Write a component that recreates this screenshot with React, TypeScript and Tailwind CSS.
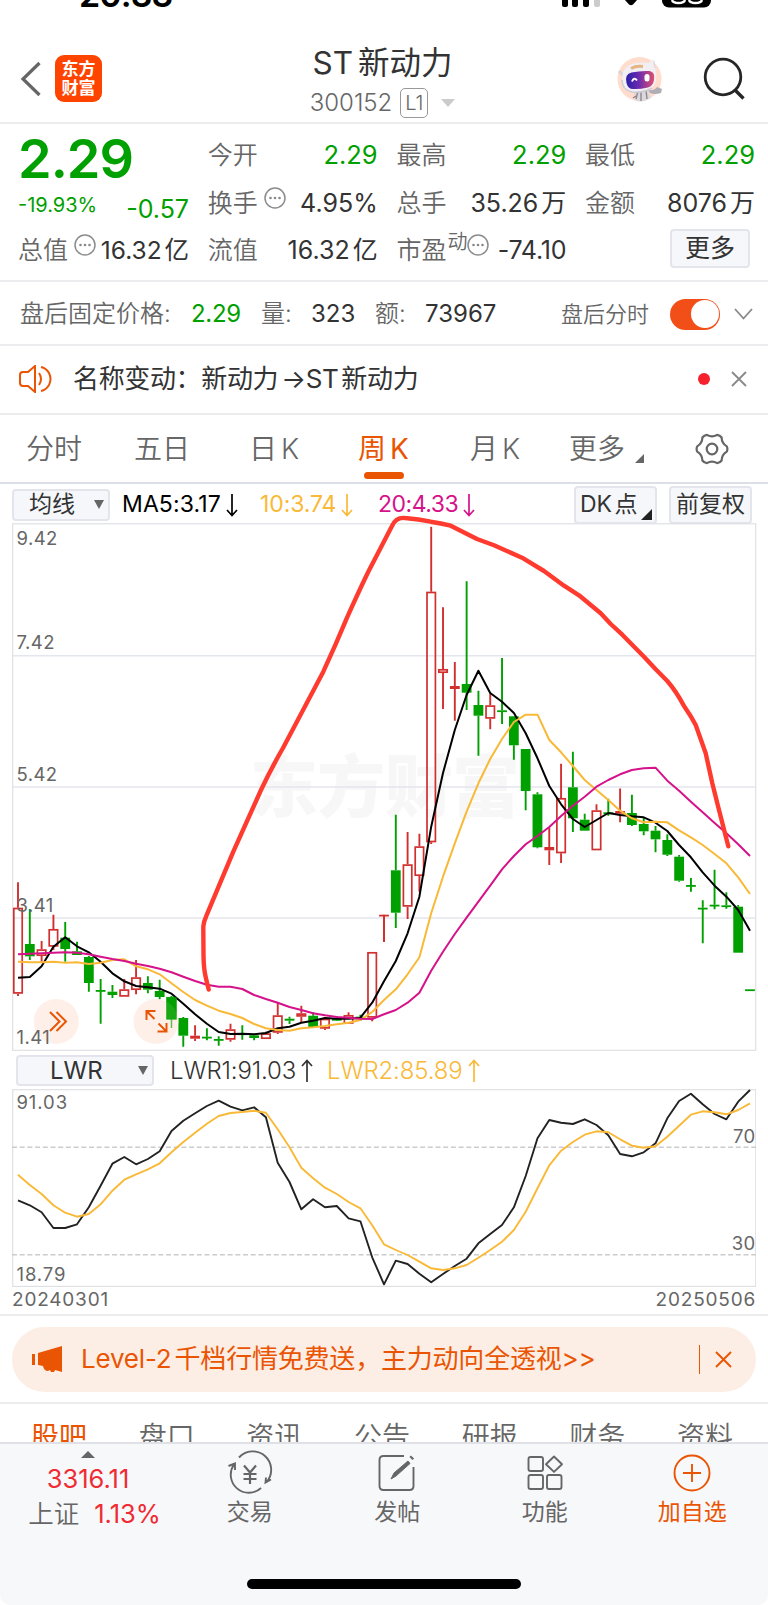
import type { ReactNode } from "react"

const font = "font-['Inter','Noto_Sans_CJK_SC',sans-serif]"

// [type, high, bodyTop, bodyBottom, low]: u = hollow rise, f = filled rise, d = fall
type Candle = ["u" | "f" | "d", number, number, number, number]

const candles: Candle[] = [
  ["u", 882.3, 907.7, 993.7, 996],
  ["d", 909, 944, 956.3, 960],
  ["u", 941, 949.3, 956, 961.7],
  ["u", 914.7, 929, 946.7, 950],
  ["d", 922, 937.7, 949, 961.7],
  ["d", 941.7, 951.3, 955, 955],
  ["d", 956, 957, 983, 991.7],
  ["d", 979, 990, 991.3, 1023.7],
  ["d", 985, 991.7, 995, 998],
  ["u", 979, 989.3, 996.7, 996.7],
  ["u", 960, 977.3, 990, 994.3],
  ["d", 976.3, 983, 989.7, 993.3],
  ["d", 979.7, 991, 997, 999.3],
  ["d", 996, 997.3, 1019.3, 1028],
  ["d", 1017, 1018, 1035.7, 1046.7],
  ["f", 1025.3, 1035.7, 1038.7, 1041],
  ["d", 1028.3, 1036.7, 1038, 1040.3],
  ["d", 1036.3, 1039, 1040.3, 1045.7],
  ["u", 1023.7, 1029.3, 1039.7, 1041.7],
  ["d", 1025.3, 1033.3, 1034.7, 1039.7],
  ["d", 1034, 1035.3, 1038, 1040.3],
  ["u", 1031.7, 1033.3, 1039, 1039],
  ["u", 1002.7, 1015.3, 1032.7, 1034],
  ["d", 1016.7, 1018.7, 1020.7, 1024],
  ["u", 1005.7, 1013.3, 1016.7, 1022],
  ["d", 1012.3, 1015.7, 1027, 1027.7],
  ["u", 1017, 1018.7, 1028.7, 1030],
  ["d", 1016, 1018.7, 1020.7, 1021],
  ["u", 1012.3, 1015, 1023.7, 1023.7],
  ["d", 1014.7, 1016.7, 1019.3, 1021],
  ["u", 952, 952, 1017.7, 1021.3],
  ["f", 915, 914.7, 916, 942],
  ["d", 814.7, 870.3, 912.7, 928],
  ["u", 832, 864.3, 906.7, 919],
  ["u", 833.7, 846.3, 876, 891.7],
  ["u", 526.7, 591.7, 842.3, 844],
  ["u", 607.3, 669, 673, 709],
  ["f", 662, 686, 689, 720.7],
  ["d", 581.3, 684, 692.7, 710],
  ["d", 690.7, 705, 715.7, 755.7],
  ["u", 693.3, 705.3, 718.7, 729.3],
  ["d", 658, 710.3, 711.7, 724],
  ["d", 716, 716.3, 745.3, 759.7],
  ["d", 749, 749, 791, 810.3],
  ["d", 792.3, 794.3, 847.3, 848.3],
  ["f", 827.7, 847, 850.3, 865],
  ["u", 763.7, 798, 853.3, 863],
  ["d", 751.7, 787.3, 818.3, 832],
  ["d", 813.7, 819.7, 830.7, 830.7],
  ["u", 804.3, 810.3, 850.3, 850.3],
  ["d", 798.7, 812.3, 813.7, 815.7],
  ["f", 788.5, 811, 813.7, 822.3],
  ["d", 794.7, 813, 825, 826],
  ["d", 817.7, 824, 831.3, 835.3],
  ["d", 826, 830.7, 839.3, 852.3],
  ["d", 834.3, 840, 854.7, 856],
  ["d", 855, 856.7, 880.7, 881.7],
  ["d", 878, 885, 886.3, 891.7],
  ["d", 900.3, 907.7, 909, 943.3],
  ["d", 869.7, 904.7, 906, 909.3],
  ["d", 892.3, 905.3, 906.7, 908.7],
  ["d", 905, 906.7, 952.7, 952.7],
  ["d", 989.3, 989.3, 990.7, 990.7],
]

const ma5 = [
  977.7, 977, 966.3, 946.7, 937.3, 946.3, 952.3, 961.7, 973.3, 981.3, 986, 987.3, 988.7, 993.7, 1003.7, 1014.3,
  1023.7, 1032, 1034, 1033.7, 1034.3, 1033, 1028.3, 1026.7, 1022.7, 1020.7, 1018, 1018.7, 1018.7, 1017.7, 1002.7,
  981.3, 961, 933.3, 896.7, 826.7, 773, 730, 695, 670.7, 693, 701.7, 713, 733.3, 758.3, 786, 804.3, 819, 827, 820,
  813, 815, 816.3, 817.3, 822.7, 831, 845, 857.3, 872.3, 885.7, 896.7, 910, 930.7,
]

const ma10 = [
  961.7, 962.3, 962.3, 961.7, 962.7, 962.3, 964, 962.7, 960, 959.3, 966.3, 969.3, 974.3, 983.3, 992, 1000, 1005.7,
  1010.7, 1014, 1018, 1024, 1028.3, 1030, 1030.7, 1028.3, 1027.3, 1026, 1024.3, 1022.7, 1020, 1012, 1000, 989.3,
  974.3, 957.3, 913.3, 876.7, 843.3, 811.7, 783.3, 759, 739, 722, 714.7, 714.7, 740, 752.3, 766, 780, 790, 800,
  810.7, 818.3, 822.3, 821.7, 822.3, 830.3, 837.3, 845, 854, 863.3, 877.3, 894,
]

const ma20 = [
  954.3, 953.7, 953.3, 952.7, 952.3, 952.7, 954.3, 956.7, 959, 961, 963.7, 966, 968.7, 972.3, 976.7, 981, 984.7,
  986.7, 986.7, 989, 995, 999, 1002.7, 1007, 1010, 1013.3, 1015.3, 1017, 1017.7, 1018.7, 1019, 1014.3, 1010, 1002.7,
  992.7, 970.7, 951.7, 934, 917.7, 901.7, 885.7, 869.3, 856, 844.3, 836, 827, 816, 805.7, 796.7, 786.7, 780, 774.3,
  770, 768.3, 767.7, 780.7, 790.7, 801.7, 812.3, 823, 833.3, 844.3, 856,
]

const lwr1 = [
  451, 466, 487, 534, 534, 523, 472, 407, 341, 321, 343, 327, 304, 243, 212, 190, 168, 152, 170, 181, 172, 202, 338,
  396, 478, 448, 472, 468, 505, 514, 622, 703, 632, 642, 671, 697, 672, 648, 626, 580, 552, 525, 472, 378, 265, 210,
  218, 222, 208, 225, 256, 312, 319, 307, 280, 205, 153, 131, 163, 192, 208, 155, 120,
]

const lwr2 = [
  374, 405, 432, 466, 488, 500, 492, 463, 422, 389, 373, 358, 340, 307, 276, 248, 221, 198, 189, 186, 182, 188, 238,
  292, 353, 385, 413, 432, 456, 475, 526, 583, 600, 615, 635, 655, 660, 655, 645, 623, 600, 575, 540, 485, 415, 346,
  302, 276, 254, 244, 247, 268, 287, 293, 289, 260, 227, 194, 184, 187, 193, 180, 160,
]

const x = (i: number) => 18 + i * 11.806
const line = (ys: number[]) => ys.map((y, i) => `${x(i).toFixed(1)},${y}`).join(" ")
const lwrLine = (ys: number[]) => ys.map((y, i) => `${x(i).toFixed(1)},${(1050 + y / 3).toFixed(1)}`).join(" ")

const periods = [
  { label: "分时", width: "w-[108px]" },
  { label: "五日", width: "w-[115px]" },
  { label: "日 K", width: "w-[109px]" },
  { label: "周 K", width: "w-[112px]", active: true },
  { label: "月 K", width: "w-[99px]" },
]

const sections = ["股吧", "盘口", "资讯", "公告", "研报", "财务", "资料"]

export default function App() {
  return (
    <div
      className={`flex h-[1605px] w-[768px] flex-col overflow-hidden bg-white leading-none text-[#333] [word-spacing:-4px] ${font}`}
    >
      <StatusBar />
      <Header />
      <QuotePanel />
      <AfterHours />
      <Notice />
      <PeriodTabs />
      <PriceChart />
      <LwrChart />
      <Banner />
      <div className="flex h-[38px] shrink-0 justify-between overflow-hidden pl-[31px] pr-[35px] pt-[19px] text-[28px] text-[#666]">
        {sections.map((s, i) => (
          <span key={s} className={i === 0 ? "text-[#ea5504]" : "font-[350]"}>
            {s}
          </span>
        ))}
      </div>
      <BottomBar />
    </div>
  )
}

function StatusBar() {
  return (
    <div className="flex h-[30px] shrink-0 items-start overflow-hidden">
      <div className="-mt-[22px] ml-[79px] w-[440px] text-[34px] font-semibold tracking-[-0.9px] text-black">20:33</div>
      <svg className="ml-[41px]" width="152" height="12" viewBox="560 0 152 12">
        <rect x="562" y="-8" width="6" height="15" rx="2" />
        <rect x="572" y="-8" width="6" height="15" rx="2" />
        <rect x="583" y="-8" width="6" height="15" rx="2" />
        <rect x="594" y="-8" width="6" height="15" rx="2" fill="#ccc" />
        <path d="M625 0h12l-4 4.500q-2 1.500-4 0z" />
        <rect x="662" y="-16" width="49" height="23.500" rx="7" />
        <path d="M672 0q1 3 6.500 3t6.500-3M689 0q1 3 6.500 3t6.500-3" fill="none" stroke="#fff" strokeWidth="2.400" />
      </svg>
    </div>
  )
}

function Header() {
  return (
    <header className="flex h-[94px] shrink-0 items-center border-b-2 border-[#ececee] pl-[20px] pt-[5px]">
      <svg width="22" height="36" viewBox="0 0 22 36" fill="none" stroke="#666" strokeWidth="3.200">
        <path d="M19.500 2 3 18l16.500 16" />
      </svg>
      <div className="ml-[13px] flex h-[47px] w-[47px] flex-col items-center justify-center gap-[1px] rounded-[9px] bg-[#ff4400] text-[17px] font-bold leading-[18px] text-white">
        <span>东方</span>
        <span>财富</span>
      </div>
      <div className="ml-[207px] flex w-[147px] flex-col items-center pt-[8px]">
        <div className="whitespace-nowrap text-[31.500px] text-[#333]">ST 新动力</div>
        <div className="mt-[10px] flex items-center text-[#666]">
          <span className="text-[24px] font-light">300152</span>
          <span className="ml-[8px] flex h-[30px] w-[28px] items-center justify-center rounded-[5px] border-[1.500px] border-[#999] text-[20px] font-light">
            L1
          </span>
          <svg className="ml-[13px]" width="14" height="8">
            <path d="M0 0h14L7 8z" fill="#ccc" />
          </svg>
        </div>
      </div>
      <Robot />
      <svg className="ml-[40px]" width="44" height="44" viewBox="0 0 44 44" fill="none" stroke="#262626" strokeWidth="2.800">
        <circle cx="20" cy="20" r="17.800" />
        <path d="m32 33 8.500 8.500" strokeWidth="3.400" />
      </svg>
    </header>
  )
}

function Robot() {
  return (
    <svg className="ml-[161px]" width="46" height="46" viewBox="0 0 46 46">
      <defs>
        <linearGradient id="visor">
          <stop offset="0" stopColor="#2a1fa8" />
          <stop offset=".45" stopColor="#6a2bb0" />
          <stop offset="1" stopColor="#e0506e" />
        </linearGradient>
      </defs>
      <circle cx="22.500" cy="23" r="22" fill="#ffdccb" />
      <path d="M17 34h14l3 8q-10 6-16 2z" fill="#dcd8db" />
      <path d="M19 43l2-8M29 34l1 9M24 36v9M16 42l3-2" stroke="#8f8790" strokeWidth="1.400" />
      <path d="M31 34q6 1 9-3l5 2-1 4q-6 2-11 0z" fill="#b0adb5" />
      <path d="M2 15l5 5M36 5l1 8" stroke="#d8d4d8" strokeWidth="3" />
      <path d="M5 24Q5 9 19 7q7-1 13 0l4-4 1 7q3 5 2 13 0 7-5 9-9 5-19 4-10-1-10-12z" fill="#f1eff3" />
      <path d="M5 24q0 10 10 12 12 1 20-4" fill="none" stroke="#cfcbd2" strokeWidth="1.500" />
      <path d="M14 12.500q5-3 12-2" stroke="#e5b480" strokeWidth="2.800" fill="none" />
      <path d="M9.500 27q-2-9 5-10.500 9-2 18-1.500 6 1 4.500 9-1 6-6 7.500-9 2-15 1.500-5 0-6.500-6z" fill="url(#visor)" />
      <path d="M15 25.500q2-5 5-1" stroke="#fff" strokeWidth="2" fill="none" />
      <rect x="27.500" y="18" width="5" height="7.500" rx="2.500" fill="#fff" />
    </svg>
  )
}

function Dots() {
  return (
    <svg width="22" height="22" viewBox="0 0 22 22" className="shrink-0">
      <circle cx="11" cy="11" r="10" fill="none" stroke="#8c8c8c" strokeWidth="1.500" />
      <g fill="#888">
        <circle cx="6.500" cy="11" r="1.300" />
        <circle cx="11" cy="11" r="1.300" />
        <circle cx="15.500" cy="11" r="1.300" />
      </g>
    </svg>
  )
}

function Cell({ label, extra, children, down }: { label: string; extra?: ReactNode; children: ReactNode; down?: boolean }) {
  return (
    <div className="flex items-center whitespace-nowrap">
      <span className="text-[25px] font-[350] text-[#666]">{label}</span>
      {extra}
      <span className={down ? "ml-auto text-[25.500px] text-[#00a000]" : "ml-auto text-[25px] text-[#333]"}>{children}</span>
    </div>
  )
}

function QuotePanel() {
  return (
    <section className="grid h-[158px] shrink-0 grid-cols-[171px_170px_170px_170px] grid-rows-[48px_48px_46px] gap-x-[18.700px] border-b-2 border-[#ececee] pl-[18px] pt-[7px]">
      <div className="flex items-center pt-[7px] text-[54px] font-semibold tracking-[-1px] text-[#00a000]">2.29</div>
      <Cell label="今开" down>2.29</Cell>
      <Cell label="最高" down>2.29</Cell>
      <Cell label="最低" down>2.29</Cell>

      <div className="flex items-center justify-between pt-[4px] text-[#00a000]">
        <span className="text-[20px]">-19.93%</span>
        <span className="pt-[8px] text-[25px]">-0.57</span>
      </div>
      <Cell label="换手" extra={<span className="mb-[10px] ml-[6px]"><Dots /></span>}>4.95%</Cell>
      <Cell label="总手">35.26 万</Cell>
      <Cell label="金额">8076 万</Cell>

      <Cell label="总值" extra={<span className="mb-[10px] ml-[6px]"><Dots /></span>}>
        <span className="text-[24.500px]">16.32 亿</span>
      </Cell>
      <Cell label="流值">16.32 亿</Cell>
      <Cell
        label="市盈"
        extra={
          <span className="mb-[10px] ml-px flex items-center">
            <span className="mb-[6px] text-[20px] font-[350] text-[#666]">动</span>
            <Dots />
          </span>
        }
      >
        <span className="tracking-[-0.2px]">-74.10</span>
      </Cell>
      <div className="flex items-center justify-end pb-[4px] pr-[5px]">
        <span className="flex h-[39px] w-[80px] items-center justify-center rounded-[4px] border-2 border-[#e4e5ec] bg-[#f6f7fa] text-[25px]">
          更多
        </span>
      </div>
    </section>
  )
}

function AfterHours() {
  return (
    <section className="flex h-[64px] shrink-0 items-center whitespace-nowrap border-b-2 border-[#ececee] pl-[20px] pt-[2px] text-[24px] font-[350] text-[#666]">
      <span className="w-[171px]">盘后固定价格:</span>
      <span className="w-[70px] font-normal tracking-[-0.3px] text-[#00a000]">2.29</span>
      <span className="w-[50px]">量:</span>
      <span className="w-[64px] font-normal text-[#333]">323</span>
      <span className="w-[50px]">额:</span>
      <span className="font-normal text-[#333]">73967</span>
      <span className="ml-auto text-[22px]">盘后分时</span>
      <span className="ml-[21px] flex h-[31px] w-[50px] justify-end rounded-full bg-[#f24f18] p-[1.500px]">
        <span className="h-[28px] w-[28px] rounded-full bg-white" />
      </span>
      <svg className="ml-[14px] mr-[15px]" width="19" height="12" fill="none" stroke="#888" strokeWidth="1.800">
        <path d="m1 1 8.500 9.500L18 1" />
      </svg>
    </section>
  )
}

function Notice() {
  return (
    <section className="flex h-[69px] shrink-0 items-center border-b-2 border-[#ececee] pb-px pl-[19px] pr-[21px]">
      <svg width="34" height="28" viewBox="0 0 34 28" fill="none" stroke="#ea5504" strokeWidth="2">
        <path d="M16 1v26l-7-6H4q-3 0-3-3v-8q0-3 3-3h5z" />
        <path d="M20 8q4 6 0 12M22 2q5 1 8 6 3 6 0 12-3 5-8 6" />
      </svg>
      <span className="ml-[20px] whitespace-nowrap text-[26px] tracking-[-0.35px]">
        名称变动：新动力 <span>→</span>ST 新动力
      </span>
      <span className="ml-auto h-[12px] w-[12px] rounded-full bg-[#f5222d]" />
      <svg className="ml-[21px]" width="16" height="16" stroke="#888" strokeWidth="1.800">
        <path d="m1 1 14 14M15 1 1 15" />
      </svg>
    </section>
  )
}

function PeriodTabs() {
  return (
    <nav className="flex h-[69px] shrink-0 items-center whitespace-nowrap border-b-2 border-[#dddfe6] pl-[26px] text-[28px] text-[#666]">
      {periods.map((p) => (
        <div key={p.label} className={`relative flex h-full items-center pt-px ${p.width}`}>
          <span className={p.active ? "text-[#ea5504]" : "font-[350]"}>{p.label}</span>
          {p.active ? <span className="absolute bottom-[3px] left-[6px] h-[7px] w-[40px] rounded-full bg-[#ea5504]" /> : null}
        </div>
      ))}
      <span className="pt-px font-[350]">更多</span>
      <svg className="ml-[10px] mt-[20px]" width="9" height="9">
        <path d="M9 0v9H0z" fill="#666" />
      </svg>
      <svg className="ml-[51px]" width="34" height="32" viewBox="0 0 34 32" fill="none" stroke="#666" strokeWidth="2.200">
        <path
          strokeLinejoin="round"
          d="M31.800 13.400Q33 16 31.800 18.600 26.800 21.500 26.600 27.500 25 29.800 22.100 30.100 17 27 11.900 30.100 9 29.800 7.400 27.500 7.200 21.500 2.200 18.600 1 16 2.200 13.400 7.200 10.500 7.400 4.500 9 2.200 11.900 1.900 17 5 22.100 1.900 25 2.200 26.600 4.500 26.800 10.500 31.800 13.400Z"
        />
        <circle cx="17" cy="16" r="5.300" />
      </svg>
    </nav>
  )
}

function Arrow({ up }: { up?: boolean }) {
  return (
    <svg width="12" height="24" viewBox="0 0 12 24" fill="none" stroke="currentColor" strokeWidth="1.700">
      {up ? <path d="M6 23V2M1 7l5-5.500L11 7" /> : <path d="M6 1v21M1 17l5 5.500 5-5.500" />}
    </svg>
  )
}

function PriceChart() {
  return (
    <section className="shrink-0 px-3">
      <div className="flex h-[39px] items-center whitespace-nowrap pt-[2px] text-[23px]">
        <span className="flex h-[32px] w-[98px] items-center justify-between rounded-[4px] border-2 border-[#e4e5ec] bg-[#f6f7fa] pl-[15px] pr-[4px]">
          均线
          <svg width="10" height="9">
            <path d="M0 0h10L5 9z" fill="#666" />
          </svg>
        </span>
        <span className="ml-[12px] flex w-[138px] items-center gap-[5px] tracking-[0.1px] text-black">
          MA5:3.17 <Arrow />
        </span>
        <span className="flex w-[118px] items-center gap-[5px] tracking-[-0.1px] text-[#f9b937]">
          10:3.74 <Arrow />
        </span>
        <span className="flex items-center gap-[5px] tracking-[-0.5px] text-[#d6128a]">
          20:4.33 <Arrow />
        </span>
        <span className="relative ml-auto flex h-[38px] w-[83px] items-center rounded-[4px] border-2 border-[#e4e5ec] bg-[#f6f7fa] pl-[4px]">
          DK 点
          <svg className="absolute bottom-[2px] right-[3px]" width="11" height="11">
            <path d="M11 0v11H0z" fill="#222" />
          </svg>
        </span>
        <span className="ml-[12px] mr-[4px] flex h-[38px] w-[83px] items-center justify-center rounded-[4px] border-2 border-[#e4e5ec] bg-[#f6f7fa]">
          前复权
        </span>
      </div>
      <svg className="block overflow-visible" width="744" height="528" viewBox="12 523 744 528">
        <text x="250" y="812" fontSize="68" fontWeight="900" fill="#f7f7f7" textLength="270">
          东方财富
        </text>
        <g fill="none" stroke="#e4e6ee" strokeWidth="1.600">
          <path d="M12 655.700h744M12 787h744M12 918h744" />
          <rect x="12.700" y="523.800" width="743" height="526.500" stroke="#dfe0e4" strokeWidth="1.200" />
        </g>
        {candles.map(([type, high, top, bottom, low], i) => {
          const color = type === "d" ? "#00a000" : "#d22f2f"
          const hollow = type === "u"
          return (
            <g key={i} stroke={color} strokeWidth="1.900">
              <path d={`M${x(i)} ${high}V${top}M${x(i)} ${bottom}V${low}`} />
              {hollow ? (
                <rect x={x(i) - 4.2} y={top + 0.8} width="8.400" height={bottom - top - 1.6} fill="none" strokeWidth="1.700" />
              ) : (
                <rect x={x(i) - 4.9} y={top} width="9.800" height={Math.max(bottom - top, 1.8)} fill={color} stroke="none" />
              )}
            </g>
          )
        })}
        {/* the filled doji keeps its lower shadow through the body */}
        <path d={`M${x(31)} 915V942`} stroke="#d22f2f" strokeWidth="1.900" />
        <g fill="none" strokeWidth="2" strokeLinejoin="round">
          <polyline points={line(ma5)} stroke="#000" />
          <polyline points={line(ma10)} stroke="#f9b937" />
          <polyline points={line(ma20)} stroke="#d6128a" />
        </g>
        <circle cx="56.300" cy="1021.500" r="22.500" fill="#fdeae0" fillOpacity=".7" />
        <circle cx="156" cy="1021.500" r="22.500" fill="#fdeae0" fillOpacity=".7" />
        <path d={`M${x(13) - 4.9} 997.300h9.800v22h-9.800zM${x(13)} 1019v9`} fill="#00a000" fillOpacity=".85" stroke="#00a000" strokeWidth=".5" />
        <g fill="none" stroke="#ea5504" strokeWidth="2">
          <path d="m50 1012 9.500 9.500-9.500 9.500M56.500 1012l9.500 9.500-9.500 9.500" />
          <path d="M146.500 1020v-9h9M147 1011.500l7.500 7.500M166.500 1023v8.500h-9M166 1031l-7.500-7.500" />
        </g>
        <g fill="#666" fontSize="18.500" letterSpacing=".4">
          <text x="16.500" y="544.500">9.42</text>
          <text x="16.500" y="649">7.42</text>
          <text x="16.500" y="780.500">5.42</text>
          <text x="16.500" y="912">3.41</text>
          <text x="16.500" y="1043.500">1.41</text>
        </g>
        <path
          d="M208.700 989.500C205 975 203.700 970 203.500 955L203.300 926.700Q203.500 922 206 916.700L233.300 851.700 261 790Q272 767 283 748L323.300 671.700Q336 644 346.700 618.300 358 593 368.300 571.700L392 526Q396 517 405 518 419 519 430.700 521.700 441 523 450.700 525.700L477 539 494 545.300 522 557.700 544 571 564 585.700 579 595.300 600.700 613.300 610.700 624 622.300 634.700 644 656.700 655.700 669.300 667.300 681Q676 691 684 706 691 716 695.700 725L705.700 753.300 712.300 783.300 719 810 728.300 846.300"
          fill="none"
          stroke="#ff3b30"
          strokeWidth="4.400"
          strokeLinecap="round"
          strokeLinejoin="round"
        />
      </svg>
    </section>
  )
}

function LwrChart() {
  return (
    <section className="shrink-0 border-b-2 border-[#ececee]">
      <div className="flex h-[38px] items-center whitespace-nowrap pl-[16px] pt-px text-[24px]">
        <span className="flex h-[31px] w-[138px] items-center justify-between rounded-[4px] border-2 border-[#e4e5ec] bg-[#f6f7fa] pl-[32px] pr-[4px]">
          LWR
          <svg width="10" height="9">
            <path d="M0 0h10L5 9z" fill="#666" />
          </svg>
        </span>
        <span className="ml-[16px] flex w-[157px] items-center gap-[5px] font-[350] tracking-[-0.15px]">
          LWR1:91.03 <Arrow up />
        </span>
        <span className="flex items-center gap-[5px] font-[350] tracking-[-0.15px] text-[#f9b937]">
          LWR2:85.89 <Arrow up />
        </span>
      </div>
      <svg className="mx-3 block" width="744" height="198" viewBox="12 1089 744 198">
        <rect x="12.700" y="1089.700" width="743" height="196.700" fill="none" stroke="#dfe0e4" strokeWidth="1.200" />
        <path d="M12 1147.200h744M12 1254.800h744" stroke="#ccc" strokeWidth="1.600" strokeDasharray="5 2.700" />
        <g fill="#666" fontSize="18.500" letterSpacing=".9">
          <text x="16.500" y="1109">91.03</text>
          <text x="16.500" y="1281">18.79</text>
          <text x="755.500" y="1143" textAnchor="end" letterSpacing=".3">70</text>
          <text x="755.500" y="1250" textAnchor="end" letterSpacing=".3">30</text>
        </g>
        <g fill="none" strokeWidth="1.900" strokeLinejoin="round">
          <polyline points={lwrLine(lwr1)} stroke="#222" />
          <polyline points={lwrLine(lwr2)} stroke="#f9b937" />
        </g>
      </svg>
      <div className="flex h-[27px] items-center justify-between px-3 pb-[3px] text-[19px] tracking-[0.8px] text-[#666]">
        <span>20240301</span>
        <span>20250506</span>
      </div>
    </section>
  )
}

function Banner() {
  return (
    <section className="flex h-[88px] shrink-0 items-center border-b-2 border-[#ececee] px-3">
      <div className="flex h-[65px] w-full items-center rounded-full bg-[#fdeee5] pl-[19px] pr-[24px] text-[#ea5504]">
        <svg width="32" height="27" viewBox="0 0 32 27" fill="currentColor">
          <path d="M31 0v26l-7-2-1 2h-3l-1-2-2 1q-4 0-5-5l-5-1V7z" />
          <rect x="1" y="8" width="3" height="11" />
        </svg>
        <span className="ml-[18px] whitespace-nowrap text-[26px] tracking-[-0.2px]">
          Level-2 千档行情免费送，主力动向全透视&gt;&gt;
        </span>
        <span className="ml-auto h-[29px] w-[1.500px] bg-[#ea5504]" />
        <svg className="ml-[15px]" width="17" height="17" stroke="currentColor" strokeWidth="1.900">
          <path d="m1 1 15 15M16 1 1 16" />
        </svg>
      </div>
    </section>
  )
}

function BottomBar() {
  return (
    <footer className="flex grow flex-col items-center rounded-b-[10px] border-t-2 border-[#dfe1e6] bg-[#f7f8fa] text-[24px] text-[#666]">
      <div className="flex h-[126px] w-full pt-[7px]">
        <div className="flex w-[176px] flex-col items-center text-[#ef2b33]">
          <svg width="14" height="7">
            <path d="M7 0l7 7H0z" fill="#666" />
          </svg>
          <span className="mt-[8px] text-[25.500px]">3316.11</span>
          <span className="mt-[9px] flex items-center gap-[15px] pl-[13px] text-[25.500px]">
            <span className="text-[25.500px] font-[350] text-[#666]">上证</span>
            1.13%
          </span>
        </div>
        <BarItem label="交易">
          <path d="M11 3.500A18 18 0 0 1 38.500 28M33 34A18 18 0 0 1 6 10.500M.5 12l6.500-2.500v6.500M43 25.500l-5.500 3 .5-5" />
          <path d="m16 11.500 6 7 6-7M22 18.500V30M15.500 20h13M15.500 25h13" strokeWidth="2.200" />
        </BarItem>
        <BarItem label="发帖">
          <path d="M29 2H8.500Q4.500 2 4.500 6v26q0 4 4 4h26q4 0 4-4V13" />
          <path d="m16 25 3-6 14-12 2 2.500L21 22z" fill="#666" strokeWidth="1" />
          <path d="m36 4.500 1.500-1.500" strokeWidth="4.500" />
        </BarItem>
        <BarItem label="功能">
          <rect x="5.500" y="3" width="14.500" height="14" rx="2" />
          <rect x="5.500" y="21" width="14.500" height="14" rx="2" />
          <rect x="24" y="21" width="14.500" height="14" rx="2" />
          <path d="m31 2.500 8 7.700-8 7.700-8-7.700z" strokeLinejoin="round" />
        </BarItem>
        <BarItem label="加自选" active>
          <circle cx="22" cy="19" r="17.500" />
          <path d="M22 10v18M13 19h18" />
        </BarItem>
      </div>
      <div className="mt-[9px] h-[10px] w-[274px] rounded-full bg-black" />
    </footer>
  )
}

function BarItem({ label, active, children }: { label: string; active?: boolean; children: ReactNode }) {
  return (
    <div className={`flex w-[147.500px] flex-col items-center pt-[3px] ${active ? "text-[#ea5504]" : "text-[#666]"}`}>
      <svg width="44" height="38" viewBox="0 0 44 38" className="overflow-visible" fill="none" stroke="currentColor" strokeWidth="1.900">
        {children}
      </svg>
      <span className="mt-[9px] text-[23px]">{label}</span>
    </div>
  )
}
